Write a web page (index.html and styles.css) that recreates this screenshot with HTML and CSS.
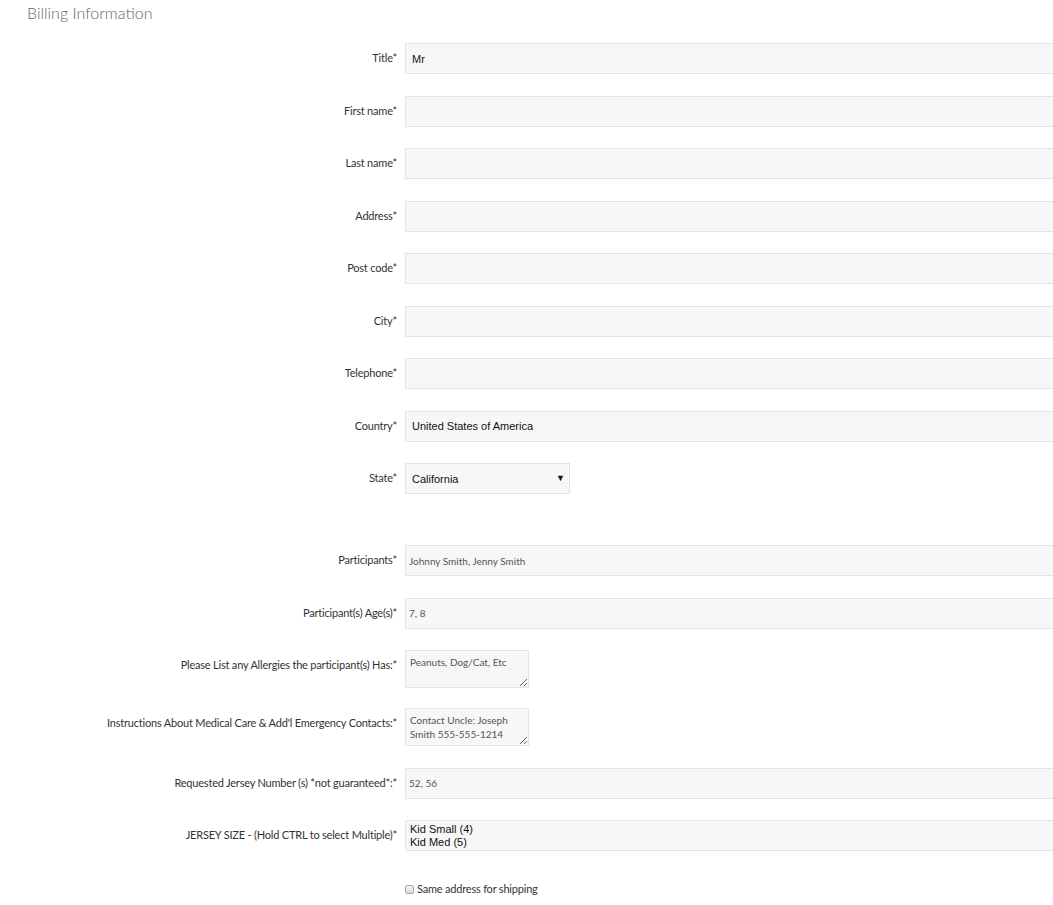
FILE: index.html
```html
<!DOCTYPE html>
<html>
<head>
<meta charset="utf-8">
<title>Billing Information</title>
<link rel="stylesheet" href="styles.css">
</head>
<body>
<div class="panel">
  <h2 class="panel-title">Billing Information</h2>
  <form class="billing">
    <div class="row">
      <label class="row-label">Title*</label>
      <input class="field field-sys" type="text" value="Mr">
    </div>
    <div class="row">
      <label class="row-label">First name*</label>
      <input class="field field-sys" type="text">
    </div>
    <div class="row">
      <label class="row-label">Last name*</label>
      <input class="field field-sys" type="text">
    </div>
    <div class="row">
      <label class="row-label">Address*</label>
      <input class="field field-sys" type="text">
    </div>
    <div class="row">
      <label class="row-label">Post code*</label>
      <input class="field field-sys" type="text">
    </div>
    <div class="row">
      <label class="row-label">City*</label>
      <input class="field field-sys" type="text">
    </div>
    <div class="row">
      <label class="row-label">Telephone*</label>
      <input class="field field-sys" type="text">
    </div>
    <div class="row">
      <label class="row-label">Country*</label>
      <input class="field field-sys" type="text" value="United States of America">
    </div>
    <div class="row row-break">
      <label class="row-label">State*</label>
      <div class="select-wrap">
        <select class="field field-sys state-select">
          <option>California</option>
        </select>
      </div>
    </div>

    <div class="row">
      <label class="row-label">Participants*</label>
      <input class="field field-lato" type="text" value="Johnny Smith, Jenny Smith">
    </div>
    <div class="row">
      <label class="row-label">Participant(s) Age(s)*</label>
      <input class="field field-lato" type="text" value="7, 8">
    </div>
    <div class="row row-tight">
      <label class="row-label">Please List any Allergies the participant(s) Has:*</label>
      <textarea class="note">Peanuts, Dog/Cat, Etc</textarea>
    </div>
    <div class="row">
      <label class="row-label">Instructions About Medical Care &amp; Add'l Emergency Contacts:*</label>
      <textarea class="note">Contact Uncle: Joseph Smith 555-555-1214</textarea>
    </div>
    <div class="row">
      <label class="row-label">Requested Jersey Number (s) *not guaranteed*:*</label>
      <input class="field field-lato" type="text" value="52, 56">
    </div>
    <div class="row">
      <label class="row-label">JERSEY SIZE - (Hold CTRL to select Multiple)*</label>
      <select class="field field-sys sizes" multiple>
        <option>Kid Small (4)</option>
        <option>Kid Med (5)</option>
      </select>
    </div>
    <div class="row">
      <span></span>
      <label class="same-ship"><input type="checkbox" class="tick"> Same address for shipping</label>
    </div>
  </form>
</div>
</body>
</html>
```

FILE: styles.css
```css
html, body {
	overflow-x: hidden;
}
body {
	margin: 0;
	background: #fff;
	color: #333;
	font-family: Lato, "Open Sans", sans-serif;
}

.panel-title {
	margin: 0;
	padding: 3px 27px 0;
	font-size: 16px; line-height: 20px;
	font-weight: 300;
	color: #666;
}

.billing {
	margin-top: 20px;
}
.row {
	display: grid;
	grid-template-columns: 397px 700px;
	column-gap: 8px;
	align-items: start;
	margin-bottom: 21.5px;
}
.row-break { margin-bottom: 51px; }
.row-tight { margin-bottom: 20px; }

.row-label {
	text-align: right;
	font-size: 11px; line-height: 15px;
	padding-top: 7px;
	color: #333;
	white-space: nowrap;
	letter-spacing: -0.2px;
}

.field {
	box-sizing: border-box;
	height: 31px;
	margin: 0;
	border: 1px solid #e4e4e4;
	background: #f7f7f7;
	outline: none;
}
.field-sys {
	padding: 0 6px;
	font-family: "Liberation Sans", Arial, sans-serif;
	font-size: 11px;
	color: #111;
}
.field-lato {
	padding: 0 3px;
	font-family: Lato, sans-serif;
	font-size: 10px;
	color: #555;
}

.select-wrap {
	position: relative;
	width: 165px;
}
.state-select {
	width: 165px;
	-webkit-appearance: none;
	appearance: none;
	border-radius: 0;
}
.select-wrap::after {
	content: "\25BC";
	position: absolute;
	right: 5px; top: 9px;
	font-size: 9px;
	color: #111;
	pointer-events: none;
}

.sizes {
	height: 31px;
	padding: 2px 4px;
	overflow: hidden;
	line-height: 13px;
}
.sizes option {
	padding: 0;
}

.note {
	box-sizing: border-box;
	width: 124px; height: 38px;
	margin: 0;
	padding: 4px 4px;
	border: 1px solid #e4e4e4;
	background: #f7f7f7;
	font-family: Lato, sans-serif;
	font-size: 10px; line-height: 14px;
	color: #555;
	outline: none;
	overflow: hidden;
}

.same-ship {
	display: flex;
	align-items: center;
	gap: 3px;
	font-size: 11px; line-height: 15px;
	color: #333;
	margin-top: 8px;
	letter-spacing: -0.2px;
}
.tick {
	-webkit-appearance: none;
	appearance: none;
	box-sizing: border-box;
	width: 9px; height: 9px;
	margin: 3px 0 0 0;
	border: 1px solid #a8a8a8;
	border-radius: 2px;
	background: linear-gradient(#f4f4f4, #dcdcdc);
}
```
